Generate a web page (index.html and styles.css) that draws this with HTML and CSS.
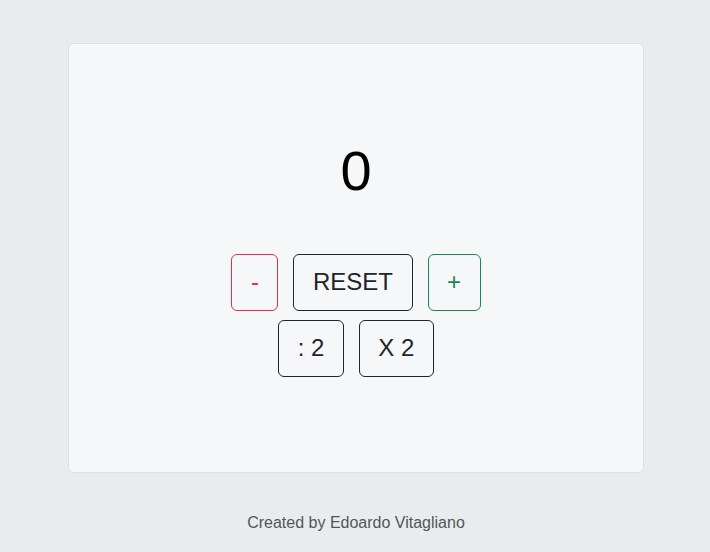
FILE: index.html
```html
<!DOCTYPE html>
<html lang="en">
<head>
<meta charset="utf-8">
<title>Counter</title>
<link rel="stylesheet" href="styles.css">
</head>
<body>
<main class="page">
  <section class="card">
    <div class="value">0</div>
    <div class="controls">
      <div class="row">
        <button class="btn btn-red">-</button>
        <button class="btn">RESET</button>
        <button class="btn btn-green">+</button>
      </div>
      <div class="row">
        <button class="btn">: 2</button>
        <button class="btn">X 2</button>
      </div>
    </div>
  </section>
  <footer class="footer">Created by Edoardo Vitagliano</footer>
</main>
</body>
</html>
```
FILE: styles.css
```css
* { box-sizing: border-box; }
html, body { margin: 0; padding: 0; }
body {
  background: #e9ecef;
  font-family: "Liberation Sans", Arial, sans-serif;
  color: #212529;
}
.page {
  display: flex;
  flex-direction: column;
  align-items: center;
  padding-top: 43px;
}
.card {
  width: 576px;
  height: 430px;
  margin-left: 2px;
  background: #f6f7f9;
  border: 1px solid #dcdfe3;
  border-radius: 5px;
  display: flex;
  flex-direction: column;
  align-items: center;
  justify-content: center;
}
.value {
  font-size: 56px;
  line-height: 1.2;
  color: #000;
  margin-bottom: 49px;
  margin-top: -2px;
}
.controls {
  display: flex;
  flex-direction: column;
  align-items: center;
  gap: 9px;
}
.row {
  display: flex;
  gap: 15px;
}
.btn {
  font-family: "Liberation Sans", Arial, sans-serif;
  font-size: 24px;
  line-height: 36px;
  padding: 9.5px 18.5px;
  background: transparent;
  color: #212529;
  border: 1px solid #212529;
  border-radius: 6px;
  cursor: pointer;
}
.btn-red { color: #dc3545; border-color: #dc3545; }
.btn-green { color: #198754; border-color: #198754; }
.footer {
  margin-top: 38px;
  margin-left: 2px;
  font-size: 16px;
  line-height: 24px;
  color: #555;
}
```
